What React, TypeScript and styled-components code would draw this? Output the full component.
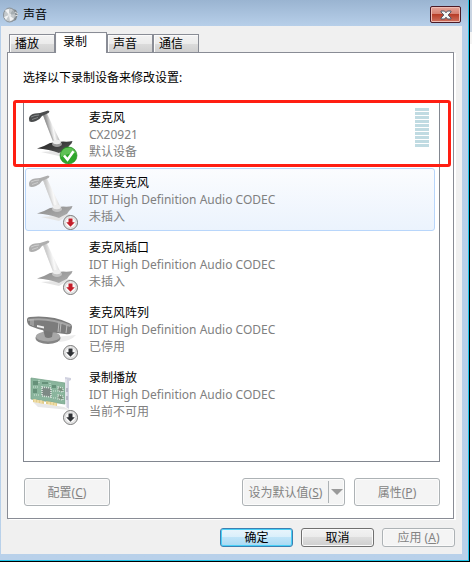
import React from "react";
import styled, { createGlobalStyle, css } from "styled-components";

const GlobalStyle = createGlobalStyle`
  * { box-sizing: border-box; }
  body {
    margin: 0;
    font-family: "Noto Sans", "Noto Sans CJK SC", sans-serif;
    font-size: 12px;
    line-height: 17px;
    color: #000;
  }
  button { font: inherit; color: inherit; margin: 0; }
`;

const Desktop = styled.div`
  display: flex;
  min-height: 100vh;
`;

const DesktopEdge = styled.div`
  width: 2px;
  background: linear-gradient(#c9d5e3 0 32px, #f4f4f4 32px 44px, #ffffff 44px 100%);
`;

const Frame = styled.main`
  flex: 1;
  min-width: 0;
  display: flex;
  flex-direction: column;
  padding: 0 7px 7px 1px;
  background: linear-gradient(#9ab4d1 0, #b7cfe9 26px, #b9d1ea 100%);
  border-right: 1px solid #000;
  border-bottom: 1px solid #000;
  box-shadow: inset -1px -1px 0 #1fc4e8;
`;

const TitleBar = styled.header`
  display: flex;
  align-items: center;
  height: 26px;
  padding: 3px 1px 0 2px;
`;

const Title = styled.h1`
  flex: 1;
  margin: 0 0 0 4px;
  font-size: 12px;
  font-weight: 400;
  line-height: 17px;
`;

const CloseButton = styled.button`
  display: flex;
  align-items: center;
  justify-content: center;
  width: 31px;
  height: 17px;
  padding: 0;
  border: 1px solid #4b1a26;
  border-radius: 2px;
  background: linear-gradient(#e5a59a 0, #d68273 45%, #b73e28 50%, #cf7260 100%);
  box-shadow: inset 0 0 0 1px #eebdb4;
`;

const Body = styled.div`
  flex: 1;
  display: flex;
  flex-direction: column;
  padding: 6px 6px 7px;
  background: #f0f0f0;
`;

const TabList = styled.div`
  position: relative;
  z-index: 1;
  display: flex;
  align-items: flex-end;
  height: 21px;
  padding-left: 2px;
`;

const Tab = styled.button<{ $active?: boolean }>`
  width: 46px;
  height: 19px;
  padding: 0 0 0 5px;
  text-align: left;
  line-height: 18px;
  border: 1px solid #898c95;
  background: linear-gradient(#f3f3f3 0, #ebebeb 50%, #dcdcdc 51%, #cfcfcf 100%);
  box-shadow: inset 1px 1px 0 #fbfbfb;
  ${(p) =>
    p.$active &&
    css`
      width: 52px;
      height: 21px;
      padding: 0 0 2px 7px;
      border-bottom: 0;
      background: #fff;
    `}
`;

const Panel = styled.section`
  flex: 1;
  display: flex;
  flex-direction: column;
  margin: -1px 2px 0 0;
  padding: 16px 13px 12px 15px;
  background: #fff;
  border: 1px solid #898c95;
  box-shadow: 2px 1px 0 #fff;
`;

const Prompt = styled.p`
  margin: 0;
`;

const ListBox = styled.div`
  position: relative;
  flex: 1;
  margin-top: 15px;
  border: 1px solid #828790;
`;

const DeviceList = styled.ul`
  margin: 0;
  padding: 1px 4px 1px 1px;
  list-style: none;
`;

const Device = styled.li<{ $selected?: boolean }>`
  display: flex;
  height: 63px;
  margin-bottom: 2px;
  padding: 5px 5px 5px 3px;
  border: 1px solid ${(p) => (p.$selected ? "#b8d6fb" : "transparent")};
  border-radius: 3px;
  background: ${(p) => (p.$selected ? "linear-gradient(#fbfcfe, #ebf3fd)" : "none")};
`;

const DeviceText = styled.div`
  flex: 1;
  margin-left: 12px;
`;

const DeviceName = styled.div`
  color: #000;
`;

const DeviceInfo = styled.div`
  color: #808080;
`;

const Meter = styled.div`
  display: grid;
  grid-template-rows: repeat(10, 3px);
  row-gap: 1px;
  width: 14px;
  margin-top: -1px;
  align-self: flex-start;
`;

const MeterBar = styled.span`
  background: #c0dbe2;
`;

const Highlight = styled.div`
  position: absolute;
  top: -2px;
  left: -11px;
  right: -12px;
  height: 67px;
  border: 3px solid #ff1e12;
  border-radius: 3px;
  pointer-events: none;
`;

const Actions = styled.div`
  display: flex;
  gap: 9px;
  margin-top: 16px;
  padding-left: 1px;
`;

const ActionButton = styled.button`
  width: 86px;
  height: 28px;
  padding: 0;
  color: #838383;
  border: 1px solid #adb2b5;
  border-radius: 3px;
  background: #f4f4f4;
  box-shadow: inset 0 0 0 1px #fcfcfc;
`;

const Spacer = styled.div`
  flex: 1;
`;

const SplitButton = styled.div`
  display: flex;
  align-items: center;
  height: 28px;
  border: 1px solid #adb2b5;
  border-radius: 3px;
  background: #f4f4f4;
  box-shadow: inset 0 0 0 1px #fcfcfc;
`;

const SplitMain = styled.button`
  width: 85px;
  height: 22px;
  padding: 0;
  color: #838383;
  border: 0;
  background: none;
`;

const SplitArrow = styled.button`
  display: flex;
  align-items: center;
  justify-content: center;
  width: 16px;
  height: 22px;
  padding: 0;
  border: 0;
  border-left: 1px solid #adb2b5;
  background: none;
`;

const Footer = styled.footer`
  display: flex;
  justify-content: flex-end;
  gap: 8px;
  margin-top: 9px;
  padding-right: 1px;
`;

const DialogButton = styled.button<{ $primary?: boolean }>`
  width: 73px;
  height: 19px;
  padding: 0;
  line-height: 17px;
  border-radius: 3px;
  border: 1px solid ${(p) => (p.$primary ? "#3c7fb1" : "#707070")};
  background: ${(p) =>
    p.$primary
      ? "linear-gradient(#e9f5fc 0, #d9effb 49%, #bfe4f8 50%, #a9d9f2 100%)"
      : "linear-gradient(#f2f2f2 0, #ebebeb 49%, #dddddd 50%, #cfcfcf 100%)"};
  box-shadow: ${(p) => (p.$primary ? "inset 0 0 0 1px #48d0f7" : "inset 0 0 0 1px #fafafa")};
  &:disabled {
    color: #838383;
    border-color: #adb2b5;
    background: #f4f4f4;
  }
`;

const Icon = styled.svg`
  display: block;
  flex: none;
`;

type Status = "default" | "unplugged" | "disabled";

function StatusBadge({ status }: { status: Status }) {
  if (status === "default") {
    return (
      <g>
        <circle cx="39.500" cy="46.500" r="8.500" fill="#2fa62b" stroke="#23871f" strokeWidth=".6" />
        <path d="M32 44a8 8 0 0 1 15 0q-8 0-15 4z" fill="#79cf6c" opacity=".65" />
        <path d="M35 46.500l3.500 4.200 6-8.500" fill="none" stroke="#fff" strokeWidth="2.600" />
      </g>
    );
  }
  return (
    <g>
      <circle cx="41.500" cy="48.500" r="7" fill="#eeeeee" stroke="#777" strokeWidth="1" />
      <circle cx="41.500" cy="48.500" r="5.400" fill="#f8f8f8" stroke="#c9c9c9" strokeWidth=".6" />
      <path
        d="M39.500 44.500h4v3.700h2.300l-4.300 4.600-4.300-4.600h2.300z"
        fill={status === "unplugged" ? "#c31e2a" : "#303236"}
      />
    </g>
  );
}

function Microphone({ dark }: { dark: boolean }) {
  const id = dark ? "mic-dark" : "mic-light";
  return (
    <g>
      <defs>
        <linearGradient id={`${id}-arm`} x1="0" x2="1" y1=".3" y2="0">
          <stop offset="0.15" stopColor={dark ? "#8a8a8a" : "#c4c4c4"} />
          <stop offset=".5" stopColor="#fafafa" />
          <stop offset=".85" stopColor={dark ? "#8f8f8f" : "#cccccc"} />
        </linearGradient>
        <linearGradient id={`${id}-base`} x1="0" x2="1" y1="0" y2="1">
          <stop offset="0" stopColor={dark ? "#202020" : "#8c8c8c"} />
          <stop offset="1" stopColor={dark ? "#5c5c5c" : "#b0b0b0"} />
        </linearGradient>
      </defs>
      <path d="M12 43l14-1 16-2-12 7z" fill="#e4e4e4" />
      <path
        d="M8 39.500q7-2 13-5.500l13-1.500q5 .5 9.500-.5l-1 2.500q-3 2.500-4.500 5.500-4 1.500-8 4-10-4-22-4.500z"
        fill={`url(#${id}-base)`}
      />
      <path d="M13.500 5l4-1.500 13.500 28.500q-3.500 2.500-7 1z" fill={`url(#${id}-arm)`} />
      <path d="M14.500 6l10 26" stroke={dark ? "#9a9a9a" : "#d2d2d2"} strokeWidth=".6" fill="none" />
      <ellipse cx="28" cy="35" rx="5" ry="3" fill={dark ? "#9b9b9b" : "#c4c4c4"} />
      <ellipse cx="27.800" cy="33" rx="4" ry="2.200" fill="#ededed" />
      <path
        d="M0 9q1-4 6-4.500l5-.5 8-2.500 1.500 1-1 1.500-6.500 3q-2 3.500-6 5-4 1.500-6.500.5Q0 11.500 0 9z"
        fill={dark ? "#4a4c4d" : "#aeaeae"}
      />
      <path d="M2 8q4-2 8-2M3 10.500l6-2" stroke={dark ? "#858889" : "#cdcdcd"} strokeWidth="1" fill="none" />
    </g>
  );
}

function ArrayMicrophone() {
  return (
    <g transform="translate(0 7)">
      <path d="M27 26l20-2q-5 6-17 7z" fill="#ececec" />
      <ellipse cx="19" cy="27" rx="12.500" ry="6" fill="#858585" />
      <ellipse cx="19" cy="25.500" rx="12" ry="5" fill="#a8a8a8" />
      <path d="M14 18l10 2-1 6q-4 2-7 0z" fill="#777" />
      <path d="M-2 9q0-3 3-3 22-2 39 6 3 1 3 4l-1 6q-2 2-6 1Q15 21 1 15q-3-2-3-6z" fill="#7c7c7c" />
      <path d="M-1 8q21-3 43 6l-1 2Q20 7-1 10z" fill="#a6a6a6" />
      <path d="M30 11.500l-1 9.500M32 12l-1 9.500M38 14l-1 8M2 8v6M4 8v7" stroke="#bcbcbc" strokeWidth="1" />
      <path d="M8 14l7 1.500v2L8 16z" fill="#f1f1f1" />
    </g>
  );
}

function SoundCard() {
  return (
    <g transform="translate(0 5)">
      <path d="M4 28l31 5 6 3-32-3z" fill="#e8e8e8" />
      <path d="M2 4l34 5v21L2 25z" fill="#8ab59d" stroke="#7aa58c" strokeWidth=".8" />
      <path d="M4 25l11 2v3L4 28zM17 27l11 2v3l-11-2z" fill="#e3cd8c" />
      <path d="M6 25v3M9 26v3M12 26v3M20 28v3M23 28v3M26 29v3" stroke="#fff3c8" strokeWidth=".8" />
      <path d="M13 13l9 1v9l-9-1z" fill="#7d8a85" stroke="#dbe5df" strokeWidth="1.600" strokeDasharray="1 1" />
      <path d="M29 13l5 1v4l-5-1zM29 21l5 1v4l-5-1z" fill="#78917f" stroke="#dce8e0" strokeWidth="1.300" strokeDasharray="1 1" />
      <path d="M4 7h5v4H4zM4 15h4v4H4zM13 8h6v2h-6zM23 11h4v3h-4z" fill="#66917a" />
      <path d="M4 13h6M5 21h6M24 17h4M24 24h4M10 6v4M21 9v3" stroke="#d4e5da" strokeDasharray="1 1" />
      <path d="M36 3l6 1v2l-2 1v28l-3-2z" fill="#d0d1df" />
      <path d="M37 5v28" stroke="#f3f3f9" strokeWidth="1" />
      <path d="M38 14v4M38 22v4" stroke="#a9abbb" strokeWidth="1.500" />
    </g>
  );
}

type Kind = "mic" | "array" | "card";

function DeviceIcon({ kind, status }: { kind: Kind; status: Status }) {
  return (
    <Icon width="48" height="56" viewBox="0 0 48 56" overflow="visible" aria-hidden="true">
      {kind === "mic" && <Microphone dark={status === "default"} />}
      {kind === "array" && <ArrayMicrophone />}
      {kind === "card" && <SoundCard />}
      <StatusBadge status={status} />
    </Icon>
  );
}

const devices: { name: string; info: string; state: string; kind: Kind; status: Status }[] = [
  { name: "麦克风", info: "CX20921", state: "默认设备", kind: "mic", status: "default" },
  { name: "基座麦克风", info: "IDT High Definition Audio CODEC", state: "未插入", kind: "mic", status: "unplugged" },
  { name: "麦克风插口", info: "IDT High Definition Audio CODEC", state: "未插入", kind: "mic", status: "unplugged" },
  { name: "麦克风阵列", info: "IDT High Definition Audio CODEC", state: "已停用", kind: "array", status: "disabled" },
  { name: "录制播放", info: "IDT High Definition Audio CODEC", state: "当前不可用", kind: "card", status: "disabled" },
];

const tabs = ["播放", "录制", "声音", "通信"];

export default function App() {
  return (
    <>
      <GlobalStyle />
      <Desktop>
        <Frame>
          <TitleBar>
            <Icon width="16" height="16" viewBox="0 0 16 16" aria-hidden="true">
              <path d="M7 1l6 2 2 4-2 6-5 2z" fill="#7e858a" />
              <ellipse cx="6.500" cy="8" rx="6" ry="7" fill="#c4c9cc" stroke="#8b9297" />
              <path d="M6 8L2 3l4-1zM6 8l5 4-4 2zM6 8l-5 2 2 3z" fill="#f2f3f4" />
              <path d="M6 8l4-5 2 4z" fill="#a6adb1" />
              <circle cx="6.500" cy="8" r="1.800" fill="#e3e5e6" />
              <path d="M12 5l3 2M12 9l3-1" stroke="#dfe2e4" />
            </Icon>
            <Title>声音</Title>
            <CloseButton aria-label="关闭">
              <Icon width="12" height="10" viewBox="0 0 12 10" aria-hidden="true">
                <path
                  d="M1 1h3.500L6 2.800 7.500 1H11v1L8.200 5 11 8v1H7.500L6 7.200 4.500 9H1V8l2.800-3L1 2z"
                  fill="#f6f6f6"
                  stroke="#535666"
                />
              </Icon>
            </CloseButton>
          </TitleBar>
          <Body>
            <TabList role="tablist">
              {tabs.map((t) => (
                <Tab key={t} role="tab" aria-selected={t === "录制"} $active={t === "录制"}>
                  {t}
                </Tab>
              ))}
            </TabList>
            <Panel role="tabpanel" aria-label="录制">
              <Prompt>选择以下录制设备来修改设置:</Prompt>
              <ListBox>
                <DeviceList>
                  {devices.map((d, i) => (
                    <Device key={d.name} $selected={i === 1}>
                      <DeviceIcon kind={d.kind} status={d.status} />
                      <DeviceText>
                        <DeviceName>{d.name}</DeviceName>
                        <DeviceInfo>{d.info}</DeviceInfo>
                        <DeviceInfo>{d.state}</DeviceInfo>
                      </DeviceText>
                      {i === 0 && (
                        <Meter role="img" aria-label="音量">
                          {Array.from({ length: 10 }, (_, n) => (
                            <MeterBar key={n} />
                          ))}
                        </Meter>
                      )}
                    </Device>
                  ))}
                </DeviceList>
                <Highlight />
              </ListBox>
              <Actions>
                <ActionButton disabled>
                  配置(<u>C</u>)
                </ActionButton>
                <Spacer />
                <SplitButton>
                  <SplitMain disabled>
                    设为默认值(<u>S</u>)
                  </SplitMain>
                  <SplitArrow disabled aria-label="更多选项">
                    <Icon width="12" height="6" viewBox="0 0 12 6" aria-hidden="true">
                      <path d="M0 0h12L6 6z" fill="#9a9a9a" />
                    </Icon>
                  </SplitArrow>
                </SplitButton>
                <ActionButton disabled>
                  属性(<u>P</u>)
                </ActionButton>
              </Actions>
            </Panel>
            <Footer>
              <DialogButton $primary>确定</DialogButton>
              <DialogButton>取消</DialogButton>
              <DialogButton disabled>
                应用 (<u>A</u>)
              </DialogButton>
            </Footer>
          </Body>
        </Frame>
        <DesktopEdge />
      </Desktop>
    </>
  );
}
